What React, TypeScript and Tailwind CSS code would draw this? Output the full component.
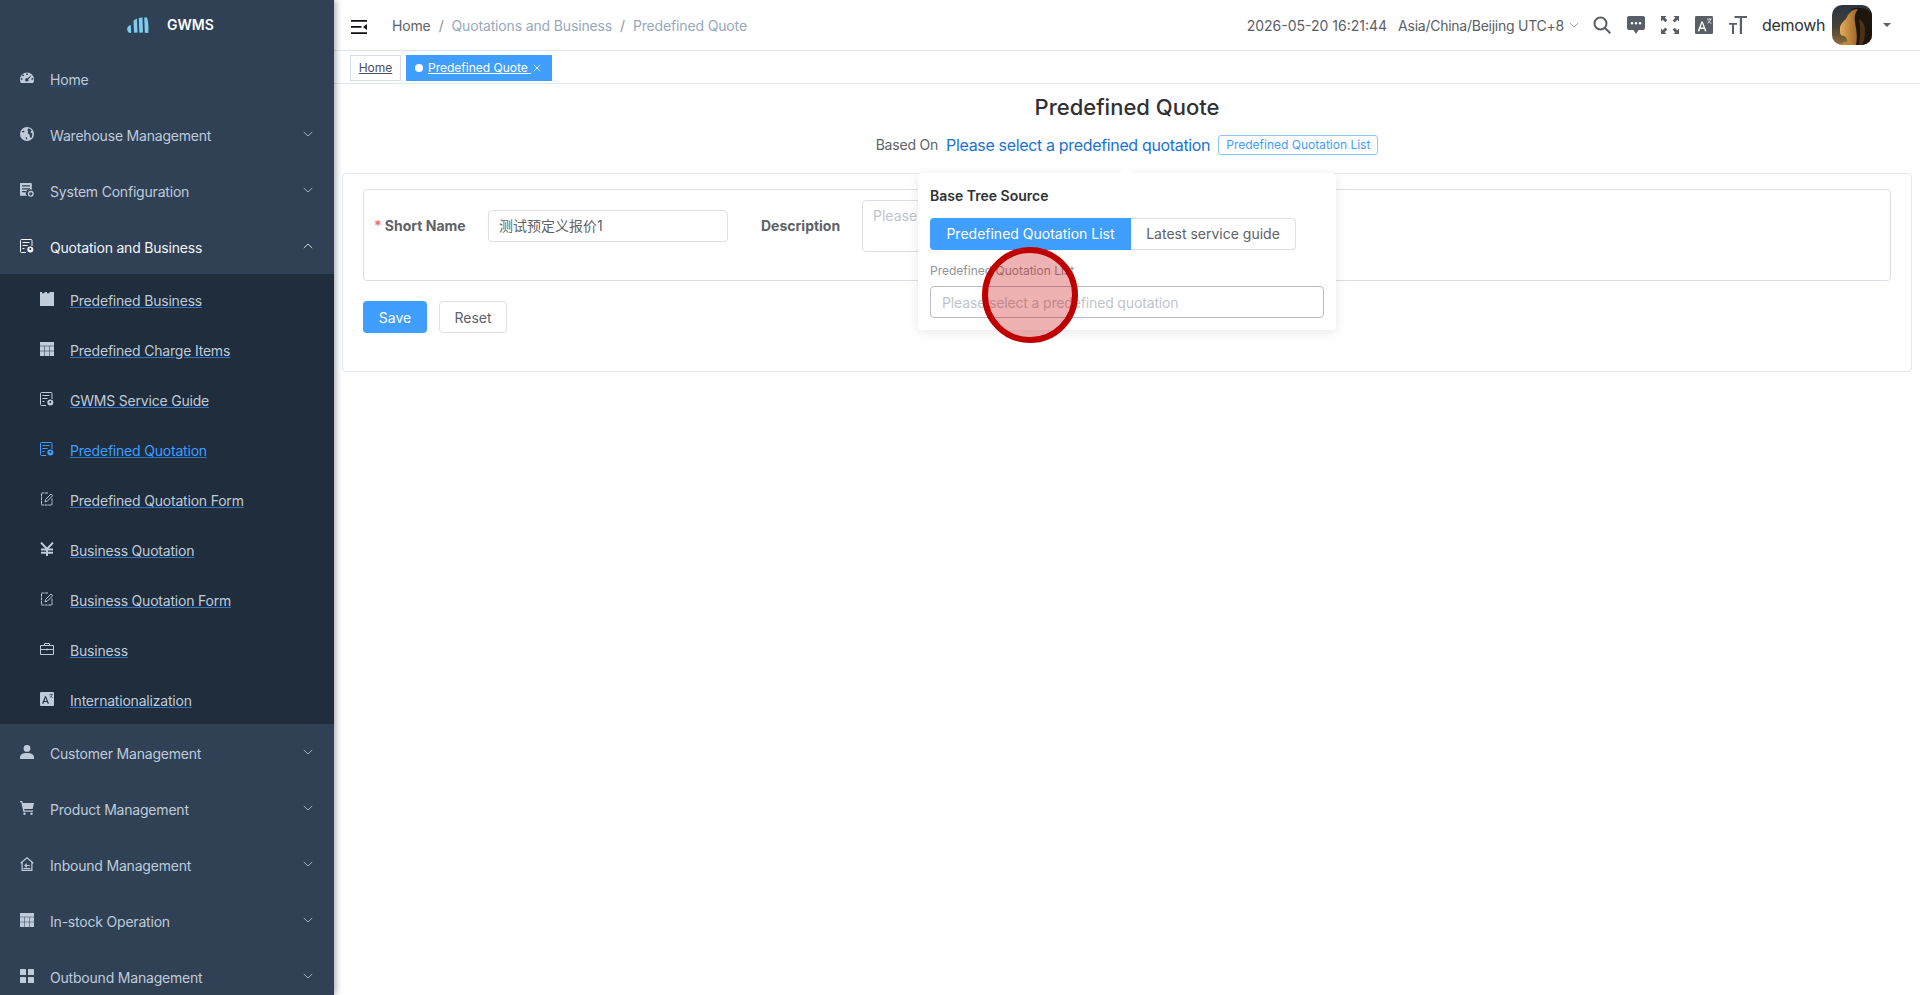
import { ReactNode } from "react";

const FONT = "font-['Inter','Noto_Sans_CJK_SC',sans-serif]";

// sidebar glyphs, all on a 14 box
const Gauge = () => (
  <svg viewBox="0 0 14 14" className="w-[14px] h-[14px]" fill="currentColor">
    <path fillRule="evenodd" d="M7 1.400a7 7 0 0 1 7 7c0 1.400-.3 2.700-.9 3.600H.9C.3 11.100 0 9.800 0 8.400a7 7 0 0 1 7-7zM3.100 3.500a.9.9 0 1 0 0 1.800.9.9 0 0 0 0-1.800zM7 2.300a.9.9 0 1 0 0 1.800.9.9 0 0 0 0-1.800zM1.700 7a.9.900 0 1 0 0 1.800.9.9 0 0 0 0-1.800zM12.300 7a.9.9 0 1 0 0 1.800.9.9 0 0 0 0-1.800zM10.700 4.600 7.600 7.300a1.700 1.700 0 1 0 .8.9l2.800-3.100z" />
  </svg>
);
const Globe = () => (
  <svg viewBox="0 0 14 14" className="w-[14px] h-[14px]">
    <circle cx="7" cy="7" r="7" fill="currentColor" />
    <path d="M8.500 1.300 7.300 3l1 1.300-.7 1.900 2 1.300.2 2 1.100 1.700 1.100-1.500.4-2.900-1.600-1.200.1-1.600 1-.3A6 6 0 0 0 8.500 1.300z" fill="#304156" />
    <path d="M1.600 4.500 3 5.600l1.500-.6L4 3.500zM5.500 10.500l.7 2 1-.6-.4-1.800z" fill="#304156" />
  </svg>
);
const ServerGear = () => (
  <svg viewBox="0 0 14 14" className="w-[14px] h-[14px]" fill="currentColor">
    <path fillRule="evenodd" d="M.5 0H11a.8.8 0 0 1 .8.8v6.300a3.600 3.600 0 0 0-4.600 5.700H.5a.5.5 0 0 1-.5-.5V.5A.5.5 0 0 1 .5 0zM2 2.300v1.200h8V2.300zm0 2.900v1.200h8V5.200zm0 2.900v1.200h4V8.100z" />
    <circle cx="10.800" cy="10.800" r="2.300" fill="none" stroke="currentColor" strokeWidth="1.300" />
  </svg>
);
const Bill = () => (
  <svg viewBox="0 0 14 14" className="w-[14px] h-[14px]" fill="none" stroke="currentColor" strokeWidth="1">
    <path d="M6 13.500H1.500a1 1 0 0 1-1-1V1.500a1 1 0 0 1 1-1h9.500a1 1 0 0 1 1 1V7" />
    <path d="M2.500 3.500h7M2.500 6.500h5M2.500 9.500h2" />
    <circle cx="10.300" cy="10.500" r="3" fill="currentColor" stroke="none" />
    <circle cx="10.300" cy="10" r="1" fill="#1f2d3d" stroke="none" />
  </svg>
);
const Calendar = () => (
  <svg viewBox="0 0 14 14" className="w-[14px] h-[14px]" fill="currentColor">
    <path d="M0 0h2v1.200h2.500V0h2.500v1.200h2.500V0H14v14H0z" />
  </svg>
);
const Cells = () => (
  <svg viewBox="0 0 14 14" className="w-[14px] h-[14px]" fill="currentColor">
    <path d="M0 0h14v3.700H0zM0 4.200h4.400v4.500H0zM4.900 4.200h4.200v4.500H4.900zM9.600 4.200H14v4.500H9.600zM0 9.200h4.400V14H0zM4.900 9.200h4.200V14H4.900zM9.600 9.200H14V14H9.600z" />
  </svg>
);
const EditForm = () => (
  <svg viewBox="0 0 14 14" className="w-[14px] h-[14px]" fill="none" stroke="currentColor" strokeWidth="1">
    <path d="M8 1H1.500v12h10.500V6.500" strokeDasharray="3 .6" />
    <path d="M5 9.800l.6-2.300L11 2l1.700 1.700-5.400 5.500z" />
  </svg>
);
const Yen = () => (
  <svg viewBox="0 0 14 14" className="w-[14px] h-[14px]" fill="none" stroke="currentColor" strokeWidth="2">
    <path d="M1 .6 7 7l6-6.400M7 7v7M1 7.500h12M1 10.800h12" />
  </svg>
);
const Briefcase = () => (
  <svg viewBox="0 0 14 14" className="w-[14px] h-[14px]" fill="none" stroke="currentColor" strokeWidth="1">
    <path d="M.5 3.500h13v9H.5zM4.500 3.500v-2h5v2M.5 7.500h13M7 6.500v2" />
  </svg>
);
const Translate = ({ w = 14, hole = "#1f2d3d" }: { w?: number; hole?: string }) => (
  <svg viewBox="0 0 14 14" style={{ width: w, height: w }}>
    <rect width="14" height="14" rx="1" fill="currentColor" />
    <path d="M2 11.800 5 4.300h1l3 7.500H7.700l-.6-1.700H4l-.6 1.700zM4.400 9h2.300L5.500 5.700z" fill={hole} />
    <path d="M9.300 2.400h3.600M11.100 2v.4M9.800 5.700c1.300-.8 2-1.900 2.300-3.300M10.300 3.500c.4 1 1.200 1.800 2.500 2.200" stroke={hole} strokeWidth=".6" fill="none" />
  </svg>
);
const User = () => (
  <svg viewBox="0 0 14 14" className="w-[14px] h-[14px]" fill="currentColor">
    <circle cx="7" cy="3.400" r="3.400" />
    <path d="M0 14v-1.800C0 9.500 3 8 7 8s7 1.500 7 4.200V14z" />
  </svg>
);
const Cart = () => (
  <svg viewBox="0 0 14 14" className="w-[14px] h-[14px]" fill="currentColor">
    <path d="M0 0h2.200l.6 2H14l-1.400 6H4.200l.3 1.400H13v1.300H3.300L1.300 1.300H0z" />
    <circle cx="4.500" cy="12.800" r="1.200" />
    <circle cx="11.500" cy="12.800" r="1.200" />
  </svg>
);
const HomeIn = () => (
  <svg viewBox="0 0 14 14" className="w-[14px] h-[14px]" fill="none" stroke="currentColor" strokeWidth="1.200">
    <path d="M.6 6.300 7 .9l6.400 5.400M2.100 5.500v7.900h9.800V5.500" />
    <path d="M9.800 8.500H5M6.800 6.700 5 8.500l1.800 1.800" />
    <path d="M3.500 11.500h7" />
  </svg>
);
const Grid4 = () => (
  <svg viewBox="0 0 14 14" className="w-[14px] h-[14px]" fill="currentColor">
    <rect width="6" height="6" rx=".6" />
    <rect x="8" width="6" height="6" rx=".6" />
    <rect y="8" width="6" height="6" rx=".6" />
    <rect x="8" y="8" width="6" height="6" rx=".6" />
  </svg>
);
const Chevron = ({ up }: { up?: boolean }) => (
  <svg viewBox="0 0 10 6" className="w-[10px] h-[6px] ml-auto mr-[1px] -mt-[3px]" fill="none" stroke="currentColor" strokeWidth=".8">
    <path d={up ? "M.8 5 5 1l4.200 4" : "M.8 1 5 5l4.200-4"} />
  </svg>
);

function Logo() {
  return (
    <svg viewBox="0 0 22 16" className="w-[22px] h-4" fill="#7ecbed">
      <path d="M1.500 9 3.800 8l.4 7.500-.9.500C1.400 16 .2 14 .2 12.500.2 11 .6 9.700 1.500 9z" />
      <path d="M6.500 3.500 10 1.500l.5 14-3.500.3z" />
      <path d="M11.800 1 15.500.5l.5 15-3.700.2z" />
      <path d="M17.200.5 20 .5c1.300 4 1.800 10 1.300 15.500l-3.500-.3z" />
    </svg>
  );
}

function TopItem({ icon, label, open, active }: { icon: ReactNode; label: string; open?: boolean; active?: boolean }) {
  return (
    <div className={`h-14 pt-[3px] flex items-center px-5 text-sm tracking-[-0.2px] ${active ? "text-[#f4f4f5]" : "text-[#bfcbd9]"}`}>
      <span className="w-[14px] h-[14px] mr-4 -mt-[3px]">{icon}</span>
      <span className={label === "Home" ? "underline decoration-dotted decoration-[#3a6ea5]/50" : ""}>{label}</span>
      {(open !== undefined) && <Chevron up={open} />}
    </div>
  );
}

function SubItem({ icon, label, active }: { icon: ReactNode; label: string; active?: boolean }) {
  return (
    <div className={`h-[50px] pt-[3px] flex items-center pl-10 text-sm tracking-[-0.2px] ${active ? "text-[#409eff]" : "text-[#bfcbd9]"}`}>
      <span className="w-[14px] h-[14px] mr-4 -mt-[3px]">{icon}</span>
      <span className="underline decoration-[#2f74c8]">{label}</span>
    </div>
  );
}

function Sidebar() {
  return (
    <aside className="w-[334px] h-full shrink-0 overflow-hidden bg-[#304156] shadow-[2px_0_6px_rgba(0,21,41,0.35)] z-10">
      <div className="h-[50px] flex items-center pl-[127px] gap-[18px]">
        <Logo />
        <span className="text-sm font-semibold text-white">GWMS</span>
      </div>
      <TopItem icon={<Gauge />} label="Home" />
      <TopItem icon={<Globe />} label="Warehouse Management" open={false} />
      <TopItem icon={<ServerGear />} label="System Configuration" open={false} />
      <TopItem icon={<Bill />} label="Quotation and Business" open active />
      <div className="bg-[#1f2d3d]">
        <SubItem icon={<Calendar />} label="Predefined Business" />
        <SubItem icon={<Cells />} label="Predefined Charge Items" />
        <SubItem icon={<Bill />} label="GWMS Service Guide" />
        <SubItem icon={<Bill />} label="Predefined Quotation" active />
        <SubItem icon={<EditForm />} label="Predefined Quotation Form" />
        <SubItem icon={<Yen />} label="Business Quotation" />
        <SubItem icon={<EditForm />} label="Business Quotation Form" />
        <SubItem icon={<Briefcase />} label="Business" />
        <SubItem icon={<Translate />} label="Internationalization" />
      </div>
      <TopItem icon={<User />} label="Customer Management" open={false} />
      <TopItem icon={<Cart />} label="Product Management" open={false} />
      <TopItem icon={<HomeIn />} label="Inbound Management" open={false} />
      <TopItem icon={<Cells />} label="In-stock Operation" open={false} />
      <TopItem icon={<Grid4 />} label="Outbound Management" open={false} />
    </aside>
  );
}

function Avatar() {
  return (
    <svg viewBox="0 0 40 40" className="w-10 h-10 rounded-[10px]">
      <defs>
        <linearGradient id="sky" x1="0" y1="0" x2="0" y2="1">
          <stop offset="0" stopColor="#2b3442" />
          <stop offset=".55" stopColor="#474238" />
          <stop offset="1" stopColor="#8f6f38" />
        </linearGradient>
        <linearGradient id="fur" x1="0" y1="0" x2="1" y2="0">
          <stop offset="0" stopColor="#e8ac58" />
          <stop offset="1" stopColor="#9c6426" />
        </linearGradient>
        <filter id="soft">
          <feGaussianBlur stdDeviation=".7" />
        </filter>
      </defs>
      <rect width="40" height="40" fill="url(#sky)" />
      <g filter="url(#soft)">
        <path d="M20 4c8-3 17 0 22 6v32H24c-3-8-2-14-2-20S17 10 20 4z" fill="#1c1611" />
        <path d="M8 22c1-3 3-6 6-8 2-5 6-10 12-10-3 4-4 8-3 13 1 7 3 14 1 23h-9c1-4 0-8-3-9-2 0-4-1-4-4z" fill="url(#fur)" />
        <path d="M27 14c4 2 6 6 6 12s-1 10-3 14h-3c1-8 2-16 0-26z" fill="#4a3218" />
        <path d="M10 38c3-2 8-2 12 2H6z" fill="#b58a3e" />
      </g>
    </svg>
  );
}

function Header() {
  return (
    <header className="h-[51px] shrink-0 flex items-center border-b border-[#dfe3ea] pl-[17px] text-sm">
      <svg viewBox="0 0 16 14" className="w-4 h-[14px] mt-[3px] text-[#111]" fill="currentColor">
        <path d="M0 0h16v1.700H0zM0 6h10.500v1.700H0zM0 12.300h16V14H0zM12 7l4-3v6z" />
      </svg>
      <nav className="ml-[25px] pt-[2px] flex tracking-[-0.15px] text-[#97a8be]">
        <span className="text-[#606266]">Home</span>
        <span className="mx-2 text-[#909399]">/</span>
        <span>Quotations and Business</span>
        <span className="mx-2 text-[#909399]">/</span>
        <span>Predefined Quote</span>
      </nav>
      <div className="ml-auto flex items-center text-[#5a5e66]">
        <span className="pt-[2px]">2026-05-20 16:21:44</span>
        <span className="pt-[2px] ml-[11px] tracking-[-0.25px]">Asia/China/Beijing UTC+8</span>
        <svg viewBox="0 0 10 6" className="w-[10px] h-[6px] ml-[5px]" fill="none" stroke="#909399" strokeWidth=".9">
          <path d="M.8 1 5 5l4.200-4" />
        </svg>
        <svg viewBox="0 0 18 18" className="w-[18px] h-[18px] ml-[14px]" fill="none" stroke="currentColor" strokeWidth="2">
          <circle cx="7.500" cy="7.500" r="6" />
          <path d="M12 12l5.300 5.300" />
        </svg>
        <svg viewBox="0 0 18 18" className="w-[18px] h-[18px] ml-4" fill="currentColor">
          <path fillRule="evenodd" d="M2 0h14a2 2 0 0 1 2 2v10a2 2 0 0 1-2 2h-4.500L9 18l-2.500-4H2a2 2 0 0 1-2-2V2a2 2 0 0 1 2-2zm3 6a1.300 1.300 0 1 0 0 2.600A1.300 1.300 0 0 0 5 6zm4 0a1.300 1.300 0 1 0 0 2.600A1.300 1.300 0 0 0 9 6zm4 0a1.300 1.300 0 1 0 0 2.600A1.300 1.300 0 0 0 13 6z" />
        </svg>
        <svg viewBox="0 0 18 18" className="w-[18px] h-[18px] ml-4" fill="currentColor">
          <path d="M0 0h5.500L3.800 1.700l2.600 2.600-2 2-2.600-2.600L0 5.500zM18 0v5.500l-1.700-1.700-2.600 2.600-2-2 2.600-2.600L12.500 0zM0 18v-5.500l1.700 1.700 2.600-2.600 2 2-2.600 2.600L5.500 18zM18 18h-5.500l1.700-1.700-2.600-2.600 2-2 2.600 2.600 1.800-1.800z" />
        </svg>
        <span className="ml-4 h-[18px]"><Translate w={18} hole="#ffffff" /></span>
        <svg viewBox="0 0 18 18" className="w-[18px] h-[18px] ml-4" fill="currentColor">
          <path d="M5.500 0H18v2h-5v16h-2.200V2H5.500zM0 7h8v1.800H5V18H3V8.800H0z" />
        </svg>
        <span className="ml-[15px] w-[62px] text-base tracking-[-0.3px] text-[#303133]">demowh</span>
        <span className="ml-2"><Avatar /></span>
        <span className="ml-[11px] mr-[29px] w-0 h-0 border-x-[4px] border-x-transparent border-t-[4px] border-t-[#5a5e66]" />
      </div>
    </header>
  );
}

function Tags() {
  return (
    <div className="h-[33px] pt-[2px] shrink-0 flex items-center gap-[5px] border-b border-[#e4e7ed] pl-4 text-xs">
      <span className="h-[26px] w-[51px] flex items-center justify-center border border-[#d8dce5] text-[#495060] underline">Home</span>
      <span className="h-[26px] w-[146px] flex items-center pl-[9px] bg-[#409eff] text-white">
        <span className="w-2 h-2 rounded-full bg-white mr-[5px]" />
        <span className="underline">Predefined Quote&nbsp;</span>
        <svg viewBox="0 0 8 8" className="w-2 h-2 ml-[2px]" fill="none" stroke="currentColor" strokeWidth=".8">
          <path d="M.8.8l6.400 6.400M7.200.8.800 7.200" />
        </svg>
      </span>
    </div>
  );
}

function QuoteForm() {
  return (
    <div className="mx-2 h-[199px] border border-[#e4e7ed] rounded px-5 pt-[15px]">
      <div className="h-[92px] border border-[#dcdfe6] rounded pl-[10px] pt-[10px] flex items-start">
        <div className="mt-[10px] h-8 w-[114px] flex items-center text-sm font-bold text-[#606266]">
          <span className="text-[#f56c6c] mr-[3px]">*</span>Short Name
        </div>
        <div className="mt-[10px] h-8 w-60 border border-[#dcdfe6] rounded px-[10px] flex items-center text-sm text-[#606266]">
          测试预定义报价1
        </div>
        <div className="ml-[33px] mt-[10px] h-8 w-[101px] flex items-center text-sm font-bold text-[#606266]">
          Description
        </div>
        <div className="h-[52px] w-60 border border-[#dcdfe6] rounded px-[10px] py-[5px] text-sm text-[#c0c4cc]">
          Please input
        </div>
      </div>
      <div className="mt-5 flex gap-3 text-sm">
        <button className="h-8 w-16 pt-[1px] rounded bg-[#409eff] text-white">Save</button>
        <button className="h-8 w-[68px] pt-[1px] rounded border border-[#dcdfe6] text-[#606266]">Reset</button>
      </div>
    </div>
  );
}

function SourcePopover() {
  return (
    <div className="absolute left-[918px] top-[173px] w-[418px] h-[157px] bg-white rounded shadow-[0_2px_12px_rgba(0,0,0,0.1)] px-3 pt-[13px] z-20">
      <span className="absolute left-[203px] -top-[5px] w-[10px] h-[10px] rotate-45 bg-white" />
      <div className="text-sm font-semibold leading-5 text-[#303133]">Base Tree Source</div>
      <div className="mt-3 flex text-sm">
        <div className="h-8 w-[201px] flex items-center justify-center bg-[#409eff] text-white rounded-l">Predefined Quotation List</div>
        <div className="h-8 w-[165px] flex items-center justify-center border border-l-0 border-[#dcdfe6] text-[#606266] rounded-r">Latest service guide</div>
      </div>
      <div className="mt-[13px] text-xs leading-4 text-[#909399]">Predefined Quotation List</div>
      <div className="mt-[7px] h-8 border border-[#b8bcc5] rounded pl-[11px] pt-[2px] flex items-center text-sm tracking-[-0.15px] text-[#c0c4cc]">
        Please select a predefined quotation
      </div>
    </div>
  );
}

export default function App() {
  return (
    <div className={`relative flex h-screen overflow-hidden bg-white ${FONT}`}>
      <Sidebar />
      <main className="flex-1 min-w-0 flex flex-col">
        <Header />
        <Tags />
        <div className="h-[47px] shrink-0 flex items-center justify-center text-[22px] font-medium text-[#303133]">Predefined Quote</div>
        <div className="h-[27px] mb-[15px] shrink-0 flex items-center justify-center text-sm text-[#606266]">
          <span className="tracking-[-0.2px]">Based On</span>
          <span className="ml-2 text-base tracking-[-0.34px] text-[#1a73d2]">Please select a predefined quotation</span>
          <span className="ml-2 h-5 px-[7px] flex items-center border border-[#8cc5ff] rounded-[3px] text-xs text-[#409eff]">Predefined Quotation List</span>
        </div>
        <QuoteForm />
      </main>
      <SourcePopover />
      <div className="absolute left-[982px] top-[247px] w-[96px] h-[96px] rounded-full border-[6px] border-[#c00000] bg-[#cc0000]/30 z-30" />
    </div>
  );
}
